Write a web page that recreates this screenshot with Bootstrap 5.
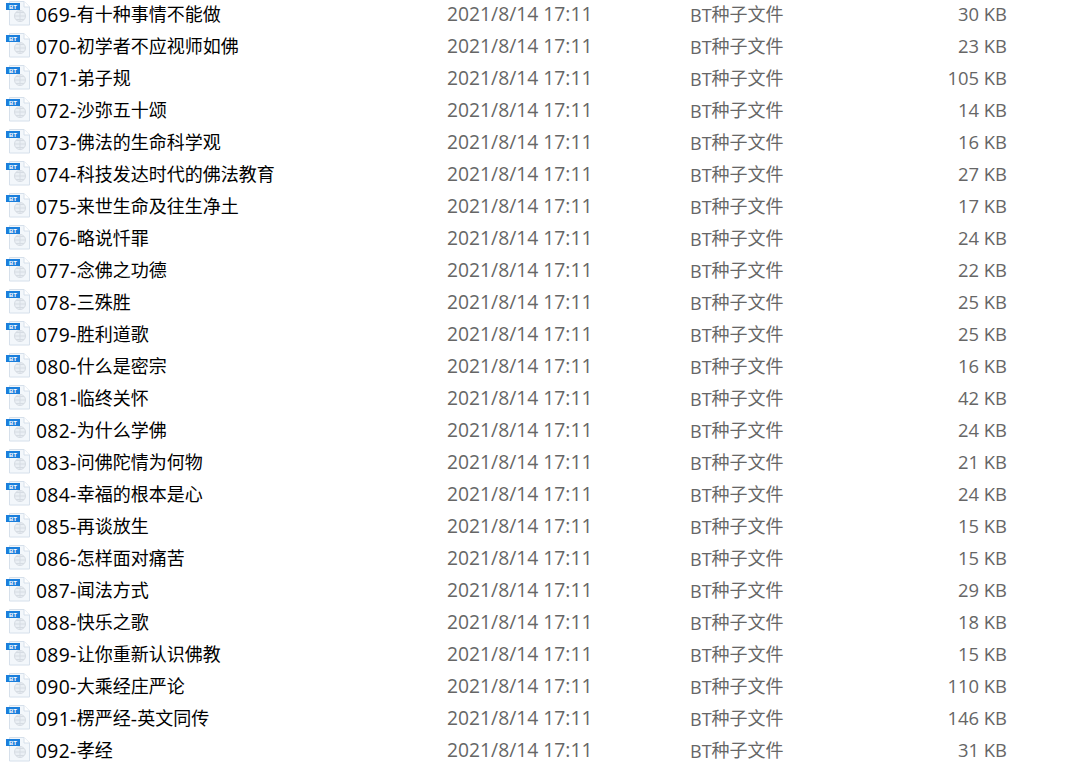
<!DOCTYPE html>
<html lang="zh">
<head>
<meta charset="utf-8">
<link href="https://cdn.jsdelivr.net/npm/bootstrap@5.3.0/dist/css/bootstrap.min.css" rel="stylesheet">
<style>
body{background:#fff;overflow:hidden;font-family:"Open Sans","Noto Sans CJK SC",sans-serif;font-size:19.3px}
.file-row{height:32px;line-height:28px;white-space:nowrap}
.file-icon{width:26px;height:26px;margin-left:5px;margin-right:5px;flex:none}
.file-name{width:411px;color:#000;flex:none;letter-spacing:.35px}
.file-date{width:243px;color:#666;flex:none}
.file-type{width:200px;color:#666;flex:none;font-size:18px}
.file-size{width:117px;color:#666;text-align:right;flex:none;font-size:18.4px}
.cjk{font-size:18px;font-family:"Noto Sans CJK SC",sans-serif;letter-spacing:0;position:relative;top:-1px}
.tag-text{font:700 6px "Liberation Sans",sans-serif;fill:#fff}
</style>
</head>
<body>
<svg width="0" height="0" class="d-block"><defs>
<g id="bt">
<path d="M4.500 1.500H19l5.500 5.500V25H4.500Z" fill="#f3f7fb" stroke="#d6e0eb"/>
<path d="M19 1.500V7h5.500" fill="#fff" stroke="#d6e0eb"/>
<rect x="1" y="3" width="14" height="7" fill="#1b7fdc"/>
<text class="tag-text" x="4" y="8.500">BT</text>
<circle cx="15" cy="16" r="5.500" fill="#eaeff4" stroke="#d6dce3"/>
<path d="M9.500 16h11M15 10.500v11M11 12.500h8M11 19.500h8" stroke="#d6dce3" fill="none"/>
</g></defs></svg>
<main class="d-flex flex-column">
<div class="file-row d-flex"><svg class="file-icon" viewBox="0 0 26 26"><use href="#bt"/></svg><div class="file-name">069-<span class="cjk">有十种事情不能做</span></div><div class="file-date">2021/8/14 17:11</div><div class="file-type">BT<span class="cjk">种子文件</span></div><div class="file-size">30 KB</div></div>
<div class="file-row d-flex"><svg class="file-icon" viewBox="0 0 26 26"><use href="#bt"/></svg><div class="file-name">070-<span class="cjk">初学者不应视师如佛</span></div><div class="file-date">2021/8/14 17:11</div><div class="file-type">BT<span class="cjk">种子文件</span></div><div class="file-size">23 KB</div></div>
<div class="file-row d-flex"><svg class="file-icon" viewBox="0 0 26 26"><use href="#bt"/></svg><div class="file-name">071-<span class="cjk">弟子规</span></div><div class="file-date">2021/8/14 17:11</div><div class="file-type">BT<span class="cjk">种子文件</span></div><div class="file-size">105 KB</div></div>
<div class="file-row d-flex"><svg class="file-icon" viewBox="0 0 26 26"><use href="#bt"/></svg><div class="file-name">072-<span class="cjk">沙弥五十颂</span></div><div class="file-date">2021/8/14 17:11</div><div class="file-type">BT<span class="cjk">种子文件</span></div><div class="file-size">14 KB</div></div>
<div class="file-row d-flex"><svg class="file-icon" viewBox="0 0 26 26"><use href="#bt"/></svg><div class="file-name">073-<span class="cjk">佛法的生命科学观</span></div><div class="file-date">2021/8/14 17:11</div><div class="file-type">BT<span class="cjk">种子文件</span></div><div class="file-size">16 KB</div></div>
<div class="file-row d-flex"><svg class="file-icon" viewBox="0 0 26 26"><use href="#bt"/></svg><div class="file-name">074-<span class="cjk">科技发达时代的佛法教育</span></div><div class="file-date">2021/8/14 17:11</div><div class="file-type">BT<span class="cjk">种子文件</span></div><div class="file-size">27 KB</div></div>
<div class="file-row d-flex"><svg class="file-icon" viewBox="0 0 26 26"><use href="#bt"/></svg><div class="file-name">075-<span class="cjk">来世生命及往生净土</span></div><div class="file-date">2021/8/14 17:11</div><div class="file-type">BT<span class="cjk">种子文件</span></div><div class="file-size">17 KB</div></div>
<div class="file-row d-flex"><svg class="file-icon" viewBox="0 0 26 26"><use href="#bt"/></svg><div class="file-name">076-<span class="cjk">略说忏罪</span></div><div class="file-date">2021/8/14 17:11</div><div class="file-type">BT<span class="cjk">种子文件</span></div><div class="file-size">24 KB</div></div>
<div class="file-row d-flex"><svg class="file-icon" viewBox="0 0 26 26"><use href="#bt"/></svg><div class="file-name">077-<span class="cjk">念佛之功德</span></div><div class="file-date">2021/8/14 17:11</div><div class="file-type">BT<span class="cjk">种子文件</span></div><div class="file-size">22 KB</div></div>
<div class="file-row d-flex"><svg class="file-icon" viewBox="0 0 26 26"><use href="#bt"/></svg><div class="file-name">078-<span class="cjk">三殊胜</span></div><div class="file-date">2021/8/14 17:11</div><div class="file-type">BT<span class="cjk">种子文件</span></div><div class="file-size">25 KB</div></div>
<div class="file-row d-flex"><svg class="file-icon" viewBox="0 0 26 26"><use href="#bt"/></svg><div class="file-name">079-<span class="cjk">胜利道歌</span></div><div class="file-date">2021/8/14 17:11</div><div class="file-type">BT<span class="cjk">种子文件</span></div><div class="file-size">25 KB</div></div>
<div class="file-row d-flex"><svg class="file-icon" viewBox="0 0 26 26"><use href="#bt"/></svg><div class="file-name">080-<span class="cjk">什么是密宗</span></div><div class="file-date">2021/8/14 17:11</div><div class="file-type">BT<span class="cjk">种子文件</span></div><div class="file-size">16 KB</div></div>
<div class="file-row d-flex"><svg class="file-icon" viewBox="0 0 26 26"><use href="#bt"/></svg><div class="file-name">081-<span class="cjk">临终关怀</span></div><div class="file-date">2021/8/14 17:11</div><div class="file-type">BT<span class="cjk">种子文件</span></div><div class="file-size">42 KB</div></div>
<div class="file-row d-flex"><svg class="file-icon" viewBox="0 0 26 26"><use href="#bt"/></svg><div class="file-name">082-<span class="cjk">为什么学佛</span></div><div class="file-date">2021/8/14 17:11</div><div class="file-type">BT<span class="cjk">种子文件</span></div><div class="file-size">24 KB</div></div>
<div class="file-row d-flex"><svg class="file-icon" viewBox="0 0 26 26"><use href="#bt"/></svg><div class="file-name">083-<span class="cjk">问佛陀情为何物</span></div><div class="file-date">2021/8/14 17:11</div><div class="file-type">BT<span class="cjk">种子文件</span></div><div class="file-size">21 KB</div></div>
<div class="file-row d-flex"><svg class="file-icon" viewBox="0 0 26 26"><use href="#bt"/></svg><div class="file-name">084-<span class="cjk">幸福的根本是心</span></div><div class="file-date">2021/8/14 17:11</div><div class="file-type">BT<span class="cjk">种子文件</span></div><div class="file-size">24 KB</div></div>
<div class="file-row d-flex"><svg class="file-icon" viewBox="0 0 26 26"><use href="#bt"/></svg><div class="file-name">085-<span class="cjk">再谈放生</span></div><div class="file-date">2021/8/14 17:11</div><div class="file-type">BT<span class="cjk">种子文件</span></div><div class="file-size">15 KB</div></div>
<div class="file-row d-flex"><svg class="file-icon" viewBox="0 0 26 26"><use href="#bt"/></svg><div class="file-name">086-<span class="cjk">怎样面对痛苦</span></div><div class="file-date">2021/8/14 17:11</div><div class="file-type">BT<span class="cjk">种子文件</span></div><div class="file-size">15 KB</div></div>
<div class="file-row d-flex"><svg class="file-icon" viewBox="0 0 26 26"><use href="#bt"/></svg><div class="file-name">087-<span class="cjk">闻法方式</span></div><div class="file-date">2021/8/14 17:11</div><div class="file-type">BT<span class="cjk">种子文件</span></div><div class="file-size">29 KB</div></div>
<div class="file-row d-flex"><svg class="file-icon" viewBox="0 0 26 26"><use href="#bt"/></svg><div class="file-name">088-<span class="cjk">快乐之歌</span></div><div class="file-date">2021/8/14 17:11</div><div class="file-type">BT<span class="cjk">种子文件</span></div><div class="file-size">18 KB</div></div>
<div class="file-row d-flex"><svg class="file-icon" viewBox="0 0 26 26"><use href="#bt"/></svg><div class="file-name">089-<span class="cjk">让你重新认识佛教</span></div><div class="file-date">2021/8/14 17:11</div><div class="file-type">BT<span class="cjk">种子文件</span></div><div class="file-size">15 KB</div></div>
<div class="file-row d-flex"><svg class="file-icon" viewBox="0 0 26 26"><use href="#bt"/></svg><div class="file-name">090-<span class="cjk">大乘经庄严论</span></div><div class="file-date">2021/8/14 17:11</div><div class="file-type">BT<span class="cjk">种子文件</span></div><div class="file-size">110 KB</div></div>
<div class="file-row d-flex"><svg class="file-icon" viewBox="0 0 26 26"><use href="#bt"/></svg><div class="file-name">091-<span class="cjk">楞严经</span>-<span class="cjk">英文同传</span></div><div class="file-date">2021/8/14 17:11</div><div class="file-type">BT<span class="cjk">种子文件</span></div><div class="file-size">146 KB</div></div>
<div class="file-row d-flex"><svg class="file-icon" viewBox="0 0 26 26"><use href="#bt"/></svg><div class="file-name">092-<span class="cjk">孝经</span></div><div class="file-date">2021/8/14 17:11</div><div class="file-type">BT<span class="cjk">种子文件</span></div><div class="file-size">31 KB</div></div>
</main>
<script src="https://cdn.jsdelivr.net/npm/bootstrap@5.3.0/dist/js/bootstrap.bundle.min.js"></script>
</body>
</html>
